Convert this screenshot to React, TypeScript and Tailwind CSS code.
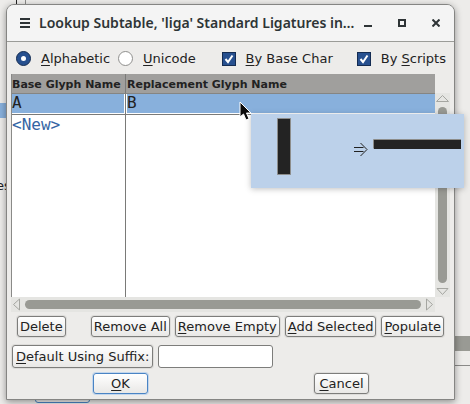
import type { ReactNode } from "react";

function Mnemonic({ children }: { children: ReactNode }) {
  return <span className="underline decoration-1 underline-offset-2">{children}</span>;
}

function PushButton({
  children,
  primary = false,
  className = "px-0.5",
}: {
  children: ReactNode;
  primary?: boolean;
  className?: string;
}) {
  return (
    <button
      type="button"
      className={
        "shrink-0 whitespace-nowrap rounded-[3px] border bg-linear-to-b from-white to-[#e9e8e6] text-center leading-[19px] " +
        (primary ? "border-[#4a84c4] shadow-[0_0_0_1px_#c3d6ec] " : "border-[#7d7d7b] shadow-[0_0_0_1px_#dddcda] ") +
        className
      }
    >
      {children}
    </button>
  );
}

function Check({ children, className = "" }: { children: ReactNode; className?: string }) {
  return (
    <label className={"flex items-center gap-[10px] whitespace-nowrap " + className}>
      <span className="relative flex">
        <input
          type="checkbox"
          defaultChecked
          className="h-[14px] w-[14px] appearance-none border border-[#142c52] bg-[#27508f]"
        />
        <svg viewBox="0 0 14 14" className="pointer-events-none absolute inset-0 h-[14px] w-[14px]" fill="none" stroke="#fff" strokeWidth="2">
          <path d="M3.5 7 6 10 10.5 3.5" />
        </svg>
      </span>
      <span>{children}</span>
    </label>
  );
}

function Radio({ children, checked = false, className = "" }: { children: ReactNode; checked?: boolean; className?: string }) {
  return (
    <label className={"flex items-center gap-[10px] whitespace-nowrap " + className}>
      <span className="relative flex items-center justify-center">
        <input
          type="radio"
          name="order"
          defaultChecked={checked}
          className="h-[15px] w-[15px] appearance-none rounded-full border border-[#8f8f8d] bg-white checked:border-[#142c52] checked:bg-[#27508f]"
        />
        <span className="pointer-events-none absolute h-[5px] w-[5px] rounded-full bg-white" />
      </span>
      <span>{children}</span>
    </label>
  );
}

function ParentWindow() {
  return (
    <div aria-hidden="true" className="absolute inset-0 overflow-hidden">
      <div className="absolute left-4 top-0 h-3 w-px bg-[#222]" />
      <div className="absolute left-[25px] top-0 h-3 w-px bg-[#8a8a88]" />
      <div className="absolute left-0 top-[103px] h-[15px] w-3 bg-[#88b0dc]" />
      <div className="absolute -left-1 top-[178px] leading-4">es</div>
      <div className="absolute right-0 top-[336px] h-[15px] w-5 bg-[#999a94]" />
      <div className="absolute right-0 top-[365px] h-px w-5 bg-[#8a8a88]" />
      <div className="absolute left-[35px] top-[382px] h-[21px] w-[55px] rounded-[3px] border border-[#4a84c4] bg-[#f2f1f0] text-center leading-[19px]">
        <Mnemonic>O</Mnemonic>K
      </div>
    </div>
  );
}

function TitleBar() {
  return (
    <header className="flex h-[37px] items-center border-b border-[#9b9c98] bg-[#f4f4f4] pl-3 pr-[14px] text-[#2e3436]">
      <button type="button" aria-label="Menu">
        <svg width="12" height="12" viewBox="0 0 12 12" className="block">
          <path d="M1 2h10M1 6h10M1 10h10" stroke="currentColor" strokeWidth="2" />
        </svg>
      </button>
      <h1 className="ml-2 min-w-0 flex-1 whitespace-nowrap font-['Noto_Sans','Open_Sans',sans-serif] text-sm font-semibold">
        Lookup Subtable, 'liga' Standard Ligatures in…
      </h1>
      <div className="flex gap-[26px]">
        <button type="button" aria-label="Minimize">
          <svg width="8" height="8" viewBox="0 0 8 8" className="block">
            <path d="M0 7h8" stroke="currentColor" strokeWidth="2" />
          </svg>
        </button>
        <button type="button" aria-label="Maximize">
          <svg width="8" height="8" viewBox="0 0 8 8" className="block">
            <path d="M1 1h6v6H1z" fill="none" stroke="currentColor" strokeWidth="2" />
          </svg>
        </button>
        <button type="button" aria-label="Close">
          <svg width="8" height="8" viewBox="0 0 8 8" className="block">
            <path d="M.5.5l7 7M7.5.5l-7 7" stroke="currentColor" strokeWidth="2" />
          </svg>
        </button>
      </div>
    </header>
  );
}

function Arrow({ d }: { d: string }) {
  return (
    <svg viewBox="0 0 15 15" className="block h-[15px] w-[15px] shrink-0" fill="none" stroke="#a5a6a1">
      <path d={d} />
    </svg>
  );
}

function LigaturePreview() {
  return (
    <div className="absolute left-[240px] top-10 h-[74px] w-[213px] bg-[#bcd1ea] shadow-[0_1px_6px_rgba(0,0,0,0.25)]">
      <svg width="213" height="74" viewBox="0 0 213 74" className="block">
        <path d="M26.5 4.5h13v56h-13z" fill="#232323" stroke="#8d8d8b" />
        <path d="M103 33.5h9.5M103 37.5h9.5M109.5 29l6.5 6.5-6.5 6.5" fill="none" stroke="#222" />
        <path d="M123 26h87v9h-87z" fill="#232323" />
        <path d="M210 25.5h-87.5v9" fill="none" stroke="#8d8d8b" />
      </svg>
    </div>
  );
}

function Pointer() {
  return (
    <svg width="13" height="21" viewBox="0 0 13 21" className="absolute left-[228px] top-[27px]">
      <path d="M1 1v15l3.5-3 2.5 6 3-1.2-2.5-5.8H12z" fill="#0b0b0b" stroke="#fff" />
    </svg>
  );
}

function GlyphTable() {
  return (
    <div className="relative mx-1 grid flex-1 grid-cols-[minmax(0,1fr)_15px] grid-rows-[minmax(0,1fr)_15px]">
      <div className="flex flex-col border-l border-[#8a8a88] bg-white">
        <table className="w-full table-fixed border-separate border-spacing-0">
          <colgroup>
            <col className="w-[114px]" />
            <col />
          </colgroup>
          <thead className="bg-[#a09f9d] text-left text-[11px] leading-4">
            <tr>
              <th className="whitespace-nowrap border-r border-b border-r-[#7a7a78] border-b-[#858583] p-0 pt-[3px] font-bold">
                Base Glyph Name
              </th>
              <th className="border-b border-[#858583] p-0 pl-px pt-[3px] font-bold">Replacement Glyph Name</th>
            </tr>
          </thead>
          <tbody className="font-['DejaVu_Sans_Mono',monospace] text-base">
            <tr>
              <td className="border-r border-b border-[#7a7a78] p-0 pb-px pr-px">
                <div className="h-[19px] bg-[#88b0dc] leading-[18px]">A</div>
              </td>
              <td className="border-b border-[#7a7a78] p-0 pb-px pl-px">
                <div className="h-[19px] bg-[#88b0dc] leading-[18px]">B</div>
              </td>
            </tr>
            <tr>
              <td className="border-r border-[#7a7a78] p-0 leading-5 text-[#3465a4]">&lt;New&gt;</td>
              <td className="p-0" />
            </tr>
          </tbody>
        </table>
        <div className="w-[114px] flex-1 border-r border-[#7a7a78]" />
      </div>
      <div className="mt-[19px] flex flex-col items-center bg-[#e5e5e2]">
        <Arrow d="M1.5 8.5 7.5 2.5l6 6z" />
        <div className="-my-px w-[9px] flex-1 rounded-full bg-[#999a94]" />
        <Arrow d="M2 6.5h11l-5.5 6z" />
      </div>
      <div className="flex items-center bg-[#e5e5e2]">
        <Arrow d="M8.5 2v11l-6-5.5z" />
        <div className="-mx-px h-[9px] flex-1 rounded-full bg-[#999a94]" />
        <Arrow d="M6.5 2v11l6-5.5z" />
      </div>
      <div />
      <LigaturePreview />
      <Pointer />
    </div>
  );
}

export default function App() {
  return (
    <div className="relative flex min-h-screen flex-col bg-[#edecea] pt-1 pr-[15px] pb-1 pl-1.5 font-['DejaVu_Sans',sans-serif] text-[13px] text-[#222]">
      <ParentWindow />
      <main className="relative flex flex-1 flex-col rounded-t-lg border border-[#858583] bg-[#edecea] shadow-[0_2px_7px_rgba(0,0,0,0.4)]">
        <div className="overflow-hidden rounded-t-[7px]">
          <TitleBar />
        </div>
        <div className="flex h-8 items-center pt-px pr-2 pl-[9px]">
          <Radio checked>
            <Mnemonic>A</Mnemonic>lphabetic
          </Radio>
          <Radio className="ml-2">
            <Mnemonic>U</Mnemonic>nicode
          </Radio>
          <Check className="ml-auto">
            <Mnemonic>B</Mnemonic>y Base Char
          </Check>
          <Check className="ml-6">
            By <Mnemonic>S</Mnemonic>cripts
          </Check>
        </div>
        <GlyphTable />
        <div className="mt-1 flex justify-between px-[10px]">
          <PushButton className="mr-5 px-0.5">Delete</PushButton>
          <PushButton>Remove All</PushButton>
          <PushButton>
            <Mnemonic>R</Mnemonic>emove Empty
          </PushButton>
          <PushButton>
            <Mnemonic>A</Mnemonic>dd Selected
          </PushButton>
          <PushButton>
            <Mnemonic>P</Mnemonic>opulate
          </PushButton>
        </div>
        <div className="mt-2 flex items-center gap-[5px] pl-[5px]">
          <PushButton className="px-[3px] py-px">
            <Mnemonic>D</Mnemonic>efault Using Suffix:
          </PushButton>
          <input
            type="text"
            aria-label="Suffix"
            className="h-[23px] w-[115px] rounded-[3px] border border-[#7d7d7b] bg-white px-1"
          />
        </div>
        <div className="mt-[5px] mb-[5px] flex justify-between pr-[85px] pl-[86px]">
          <PushButton primary className="w-[55px]">
            <Mnemonic>O</Mnemonic>K
          </PushButton>
          <PushButton className="w-[55px]">
            <Mnemonic>C</Mnemonic>ancel
          </PushButton>
        </div>
      </main>
    </div>
  );
}
